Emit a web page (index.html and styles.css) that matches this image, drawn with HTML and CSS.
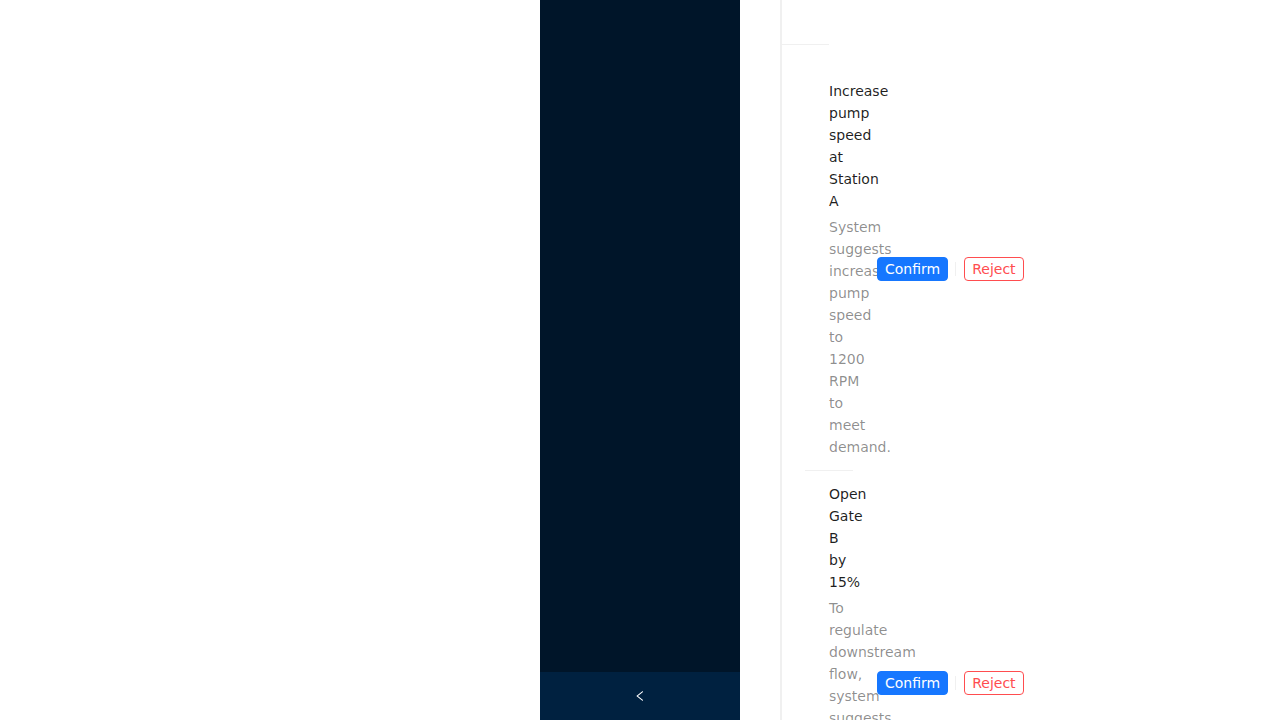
FILE: index.html
```html
<!DOCTYPE html>
<html lang="en">
<head>
<meta charset="utf-8">
<title>Suggestions</title>
<link rel="stylesheet" href="styles.css">
</head>
<body>
<div class="page">
  <div class="blank"></div>
  <aside class="sider">
    <div class="sider-body"></div>
    <div class="trigger">
      <svg class="chev" viewBox="64 64 896 896" width="12" height="12" fill="currentColor" aria-hidden="true"><path d="M724 218.3V141c0-6.7-7.7-10.4-12.9-6.3L260.3 486.8a31.86 31.86 0 000 50.3l450.8 352.1c5.3 4.1 12.9.4 12.9-6.3v-77.3c0-4.9-2.3-9.6-6.1-12.6l-360-281 360-281.1c3.8-3 6.1-7.7 6.1-12.6z"/></svg>
    </div>
  </aside>
  <div class="gap"></div>
  <main class="panel">
    <div class="panel-head"></div>
    <ul class="list">
      <li class="item">
        <div class="meta">
          <h4 class="title">Increase pump speed at Station A</h4>
          <div class="desc">System suggests increasing pump speed to 1200 RPM to meet demand.</div>
        </div>
        <ul class="actions">
          <li class="act split"><button class="btn primary">Confirm</button></li>
          <li class="act"><button class="btn danger">Reject</button></li>
        </ul>
      </li>
      <li class="divider" aria-hidden="true"></li>
      <li class="item">
        <div class="meta">
          <h4 class="title">Open Gate B by 15%</h4>
          <div class="desc">To regulate downstream flow, system suggests opening Gate B by 15% this hour.</div>
        </div>
        <ul class="actions">
          <li class="act split"><button class="btn primary">Confirm</button></li>
          <li class="act"><button class="btn danger">Reject</button></li>
        </ul>
      </li>
    </ul>
  </main>
</div>
</body>
</html>
```

FILE: styles.css
```css
html, body {
  margin: 0;
  padding: 0;
  height: 100%;
  overflow: hidden;
  background: #ffffff;
  font-family: "DejaVu Sans", "Noto Sans", sans-serif;
  font-size: 14px;
  line-height: 22px;
  color: rgba(0, 0, 0, 0.88);
}

.page {
  display: flex;
  height: 720px;
  align-items: flex-start;
}

.blank {
  width: 540px;
  flex: none;
}

.sider {
  width: 200px;
  flex: none;
  height: 720px;
  display: flex;
  flex-direction: column;
  background: #001529;
}

.sider-body {
  flex: 1;
}

.trigger {
  height: 48px;
  background: #002140;
  color: #ffffff;
  display: flex;
  align-items: center;
  justify-content: center;
}

.chev {
  display: block;
}

.gap {
  width: 40px;
  flex: none;
}

.panel {
  flex: 1;
  min-height: 720px;
  border-left: 2px solid #f0f0f0;
}

.panel-head {
  width: 47px;
  height: 44px;
  border-bottom: 1px solid #f0f0f0;
}

.list {
  list-style: none;
  margin: 23px 0 0 0;
  padding: 0;
}

.item {
  display: flex;
  align-items: center;
  padding: 12px 0;
}

.meta {
  width: 0;
  margin-left: 47px;
  flex: none;
  word-break: normal;
}

.title {
  margin: 0 0 4px 0;
  font-size: 14px;
  font-weight: normal;
  line-height: 22px;
  color: rgba(0, 0, 0, 0.88);
}

.desc {
  color: rgba(0, 0, 0, 0.45);
  line-height: 22px;
}

.divider {
  width: 48px;
  height: 1px;
  margin-left: 23px;
  background: #f0f0f0;
}

.actions {
  list-style: none;
  margin: 0 0 0 48px;
  padding: 0;
  display: flex;
  align-items: center;
  position: relative;
  z-index: 1;
}

.act {
  position: relative;
  padding: 0 8px;
  line-height: 22px;
}

.act:first-child {
  padding-left: 0;
}

.act.split::after {
  content: "";
  position: absolute;
  right: 0;
  top: 50%;
  width: 1px;
  height: 14px;
  margin-top: -7px;
  background: #f0f0f0;
}

.btn {
  display: inline-block;
  height: 24px;
  padding: 0 7px;
  border-radius: 4px;
  font-family: "DejaVu Sans", "Noto Sans", sans-serif;
  font-size: 14px;
  line-height: 22px;
  border: 1px solid transparent;
  cursor: pointer;
  vertical-align: middle;
}

.btn.primary {
  background: #1677ff;
  border-color: #1677ff;
  color: #ffffff;
}

.btn.danger {
  background: #ffffff;
  border-color: #ff4d4f;
  color: #ff4d4f;
}
```
